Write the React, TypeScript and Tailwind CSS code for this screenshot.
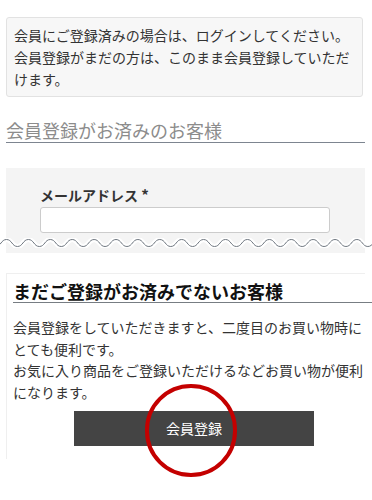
import React from "react";

const jp = { fontFamily: '"Noto Sans CJK JP", "Noto Sans", sans-serif' };

// wave path for the "cut" marker
function wavePath(width: number) {
  const period = 21.9;
  const top = 1;
  const bottom = 8;
  let x = 6.5 - period * 2;
  let d = `M ${x} ${top}`;
  while (x < width + period) {
    const h = period / 2;
    d += ` C ${x + h / 2} ${top}, ${x + h / 2} ${bottom}, ${x + h} ${bottom}`;
    d += ` C ${x + h * 1.5} ${bottom}, ${x + h * 1.5} ${top}, ${x + period} ${top}`;
    x += period;
  }
  return d;
}

export default function App() {
  return (
    <div className="w-[372px] h-[500px] bg-white overflow-hidden relative" style={jp}>
      <div className="pt-[17px] px-[6px] pr-[9px]">
        {/* notice */}
        <div className="bg-[#f7f7f7] border border-[#e2e2e2] rounded-[3px] px-[7px] py-[6px] text-[14px] leading-[22px] text-[#333]">
          会員にご登録済みの場合は、ログインしてください。会員登録がまだの方は、このまま会員登録していただけます。
        </div>
      </div>

      <div className="px-[6px] pr-[7px]">
        <h2 className="mt-[21px] text-[18px] leading-[24px] text-[#8c8c8c] border-b border-[#7d8590] font-normal">
          会員登録がお済みのお客様
        </h2>

        <div className="relative mt-[25px]">
          <div className="bg-[#f4f4f4] pt-[17px] pb-[20px] pl-[34px] pr-[35px]">
            <label className="block text-[14px] leading-[20px] font-bold text-[#333]">
              メールアドレス <span className="text-[15px]">*</span>
            </label>
            <div className="mt-[2px] h-[26px] w-[290px] bg-white border border-[#cccccc] rounded-[3px]" />
          </div>
          <svg
            className="absolute left-[-6px] top-[70px]"
            width="372"
            height="10"
            viewBox="0 0 372 10"
          >
            <path d={wavePath(372)} fill="none" stroke="#ffffff" strokeWidth="5" transform="translate(0 0.5)" />
            <path d={wavePath(372)} fill="none" stroke="#6f7780" strokeWidth="1" transform="translate(0 0.5)" />
          </svg>
        </div>

        {/* second section */}
        <div className="mt-[20px] border-t border-l border-[#efefef] pl-[6px] pt-[6px] pb-[13px]">
          <div className="mr-[-7px]">
            <h2 className="text-[18px] leading-[22px] font-bold text-[#111] border-b border-[#777d83]">
              まだご登録がお済みでないお客様
            </h2>
            <p className="mt-[14px] text-[14px] leading-[21.5px] text-[#333]">
              会員登録をしていただきますと、二度目のお買い物時にとても便利です。
              <br />
              お気に入り商品をご登録いただけるなどお買い物が便利になります。
            </p>
            <div className="mt-[8px] flex">
              <button className="ml-[61px] w-[240px] h-[35px] bg-[#444444] text-white text-[14px] flex items-center justify-center">
                会員登録
              </button>
            </div>
          </div>
        </div>
      </div>

      {/* red highlight circle */}
      <div className="absolute left-[145px] top-[384px] w-[92px] h-[93px] rounded-full border-[4.5px] border-[#c40000] pointer-events-none" />
    </div>
  );
}
